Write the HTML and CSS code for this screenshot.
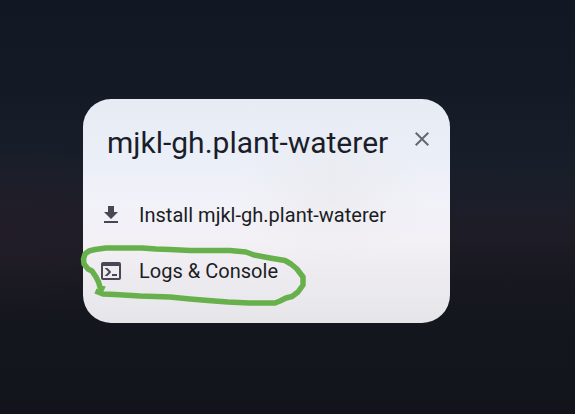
FILE: index.html
```html
<!DOCTYPE html>
<html lang="en">
<head>
<meta charset="utf-8">
<title>mjkl-gh.plant-waterer</title>
<link rel="stylesheet" href="styles.css">
</head>
<body>
<main class="dialog">
  <header class="header">
    <h1 class="title">mjkl-gh.plant-waterer</h1>
    <svg class="icon close" viewBox="0 0 24 24"><path d="M19,6.41L17.59,5L12,10.59L6.41,5L5,6.41L10.59,12L5,17.59L6.41,19L12,13.41L17.59,19L19,17.59L13.41,12L19,6.41Z"/></svg>
  </header>
  <ul class="actions">
    <li class="action">
      <svg class="icon" viewBox="0 0 24 24"><path d="M5,20H19V18H5M19,9H15V3H9V9H5L12,16L19,9Z"/></svg>
      <span class="install">Install mjkl-gh.plant-waterer</span>
    </li>
    <li class="action">
      <svg class="icon" viewBox="0 0 24 24"><path d="M20,19V7H4V19H20M20,3A2,2 0 0,1 22,5V19A2,2 0 0,1 20,21H4A2,2 0 0,1 2,19V5C2,3.89 2.9,3 4,3H20M13,17V15H18V17H13M9.58,13L5.57,9H8.4L11.7,12.3C12.09,12.69 12.09,13.33 11.7,13.72L8.42,17H5.59L9.58,13Z"/></svg>
      <span class="logs">Logs &amp; Console</span>
    </li>
  </ul>
  <svg class="marker" viewBox="75 235 240 80"><path d="M102 288L100 287L98.500 282L96 277L92 271L88 269L84 264L83.500 259L85 254L89 251L95 249.500L106 248L142 248L156 249L170 249.500L190 250.500L230 250.500L246 252L254 255L270 258L285 260.500L291 264L297 269L303 277L303 285L298 292L292 296.500L286 298L280 301L275 303L249 303L228 302L208 300.500L190 299L170 297L140 296L115 294.500L103 294L98 292"/></svg>
</main>
</body>
</html>
```
FILE: styles.css
```css
* { box-sizing: border-box; }
body {
  margin: 0;
  width: 575px;
  height: 414px;
  padding: 99px 0 0 83px;
  overflow: hidden;
  font-family: Roboto, sans-serif;
  background:
    radial-gradient(ellipse 290px 90px at 0 228px, rgba(36, 30, 41, .65), transparent),
    linear-gradient(#121823 0, #141a25 80px, #171e29 155px, #1b1e29 200px, #1e1c26 235px, #17181f 285px, #13161d 340px, #11141b 414px);
}
.dialog {
  position: relative;
  width: 367px;
  height: 224px;
  padding: 16px 16px 24px;
  border-radius: 28px;
  color: #1c1d24;
  background:
    radial-gradient(ellipse 95px 75px at 250px 92px, rgba(232, 232, 235, .6), transparent),
    linear-gradient(#e7ebf4 0, #ebeff7 65px, #f1f2f9 95px, #f3f0f6 140px, #edebf0 175px, #e6e6e9 224px);
}
.header {
  display: flex;
  justify-content: space-between;
  height: 72px;
  padding: 0 0 0 8px;
}
.title {
  margin: 8px 0 0;
  font-size: 30px;
  line-height: 40px;
  font-weight: 400;
  white-space: nowrap;
  color: #1b1e2a;
}
.icon {
  flex: none;
  width: 24px;
  height: 24px;
  fill: #4b4656;
}
.close {
  margin: 12px 0 0;
  fill: #646873;
}
.actions { margin: 0; padding: 0; list-style: none; }
.action {
  display: flex;
  align-items: center;
  gap: 16px;
  height: 56px;
  font-size: 20px;
  line-height: 28px;
  letter-spacing: .02px;
  white-space: nowrap;
}
.marker {
  position: absolute;
  left: -8px;
  top: 136px;
  width: 240px;
  height: 80px;
  fill: none;
  stroke: #68b04c;
  stroke-width: 5.5;
  stroke-linejoin: round;
  stroke-linecap: square;
}
```
